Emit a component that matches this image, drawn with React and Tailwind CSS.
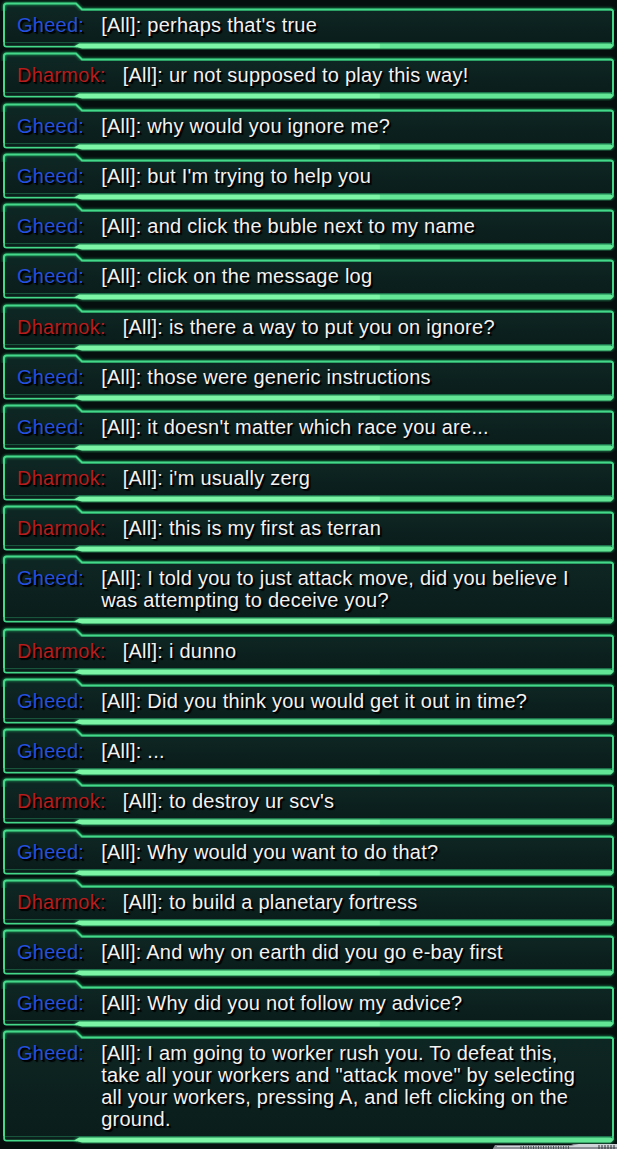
import React from "react";

const messages = [
  ["Gheed", "perhaps that's true"],
  ["Dharmok", "ur not supposed to play this way!"],
  ["Gheed", "why would you ignore me?"],
  ["Gheed", "but I'm trying to help you"],
  ["Gheed", "and click the buble next to my name"],
  ["Gheed", "click on the message log"],
  ["Dharmok", "is there a way to put you on ignore?"],
  ["Gheed", "those were generic instructions"],
  ["Gheed", "it doesn't matter which race you are..."],
  ["Dharmok", "i'm usually zerg"],
  ["Dharmok", "this is my first as terran"],
  ["Gheed", "I told you to just attack move, did you believe I was attempting to deceive you?"],
  ["Dharmok", "i dunno"],
  ["Gheed", "Did you think you would get it out in time?"],
  ["Gheed", "..."],
  ["Dharmok", "to destroy ur scv's"],
  ["Gheed", "Why would you want to do that?"],
  ["Dharmok", "to build a planetary fortress"],
  ["Gheed", "And why on earth did you go e-bay first"],
  ["Gheed", "Why did you not follow my advice?"],
  [
    "Gheed",
    'I am going to worker rush you. To defeat this, take all your workers and "attack move" by selecting all your workers, pressing A, and left clicking on the ground.',
  ],
];

const nameColor = {
  Gheed: "text-[#2450dc]",
  Dharmok: "text-[#b81d1d]",
};

const edge = "#44d98a";

// top edge with the little tab on the left
const FrameTop = () => (
  <svg className="block h-[11px] w-[617px]" viewBox="0 0 617 11">
    <path d="M4 11 L4 6 Q4 3.5 6.5 3.5 L76 3.5 L82 9.5 L611 9.5 Q613 9.5 613 11.5 Z" fill="#0e2623" />
    <path
      d="M4 11.5 L4 6 Q4 3.5 6.5 3.5 L76 3.5 L82 9.5 L610.5 9.5 Q613 9.5 613 12"
      fill="none"
      stroke={edge}
      strokeWidth="2"
      style={{ filter: "drop-shadow(0 0 1.5px #22c46c)" }}
    />
  </svg>
);

// bottom edge: thin on the left, bright thick bar on the right
const FrameBottom = () => (
  <svg className="block h-[8.3px] w-[617px]" viewBox="0 0 617 8.3">
    <rect x="4" y="0" width="609" height="3" fill="#0a1d1b" />
    <line x1="5" y1="0.6" x2="612" y2="0.6" stroke="#1a5a40" strokeWidth="1" />
    <path d="M4 0 L4 2.5 Q4 4.6 6.5 4.6 L77 4.6" fill="none" stroke={edge} strokeWidth="1.8" />
    <path d="M613 0 L613 3.5" fill="none" stroke={edge} strokeWidth="2" />
    <g style={{ filter: "drop-shadow(0 0 1.5px #2ed47a)" }}>
      <polygon points="74,4.6 79,1.6 380,1.6 380,6.4 82,6.4" fill="#7df5a6" />
      <polygon points="380,1.6 611,1.6 614,3.8 611,6.4 380,6.4" fill="#62e696" />
    </g>
    <line x1="82" y1="7.7" x2="610" y2="7.7" stroke="#17402f" strokeWidth="1" />
  </svg>
);

const ChatLine = ({ who, text }) => (
  <div className="flex flex-col">
    <FrameTop />
    <div className="mx-[3px] flex border-x-2 border-[#44d98a] bg-gradient-to-b from-[#0e2623] to-[#0a1d1b] pb-[6px] pl-[12px] pr-[24px] pt-[3px]">
      <span className={`shrink-0 pr-[17px] ${nameColor[who]}`}>{who}:</span>
      <span className="flex-1 text-[#f2f2f2]">[All]: {text}</span>
    </div>
    <FrameBottom />
  </div>
);

export default function App() {
  return (
    <div className="flex min-h-[1149px] w-[617px] flex-col bg-[#050f0e] font-['Liberation_Sans',Arial,sans-serif] text-[20px] leading-[22px] tracking-[0.25px] [text-shadow:1px_1px_0_#000,2px_2px_1px_#000]">
      {messages.map(([who, text], i) => (
        <ChatLine key={i} who={who} text={text} />
      ))}
      <div className="flex justify-end">
        <svg className="block h-[8px] w-[126px]" viewBox="0 0 126 8">
          <polygon points="4,1 80,1 88,-2 126,-2 126,8 0,8" fill="#8a8f96" />
          <polygon points="6,2 80,2 88,0 126,0 126,3 6,3" fill="#cfd4d8" />
          {Array.from({ length: 20 }).map((_, k) => (
            <line key={k} x1={30 + k * 2.5} y1="2" x2={30 + k * 2.5} y2="5" stroke="#3b3f44" strokeWidth="0.8" />
          ))}
          {Array.from({ length: 6 }).map((_, k) => (
            <line key={`b${k}`} x1={108 + k * 3} y1="1" x2={108 + k * 3} y2="5" stroke="#2e3236" strokeWidth="1" />
          ))}
        </svg>
      </div>
    </div>
  );
}
